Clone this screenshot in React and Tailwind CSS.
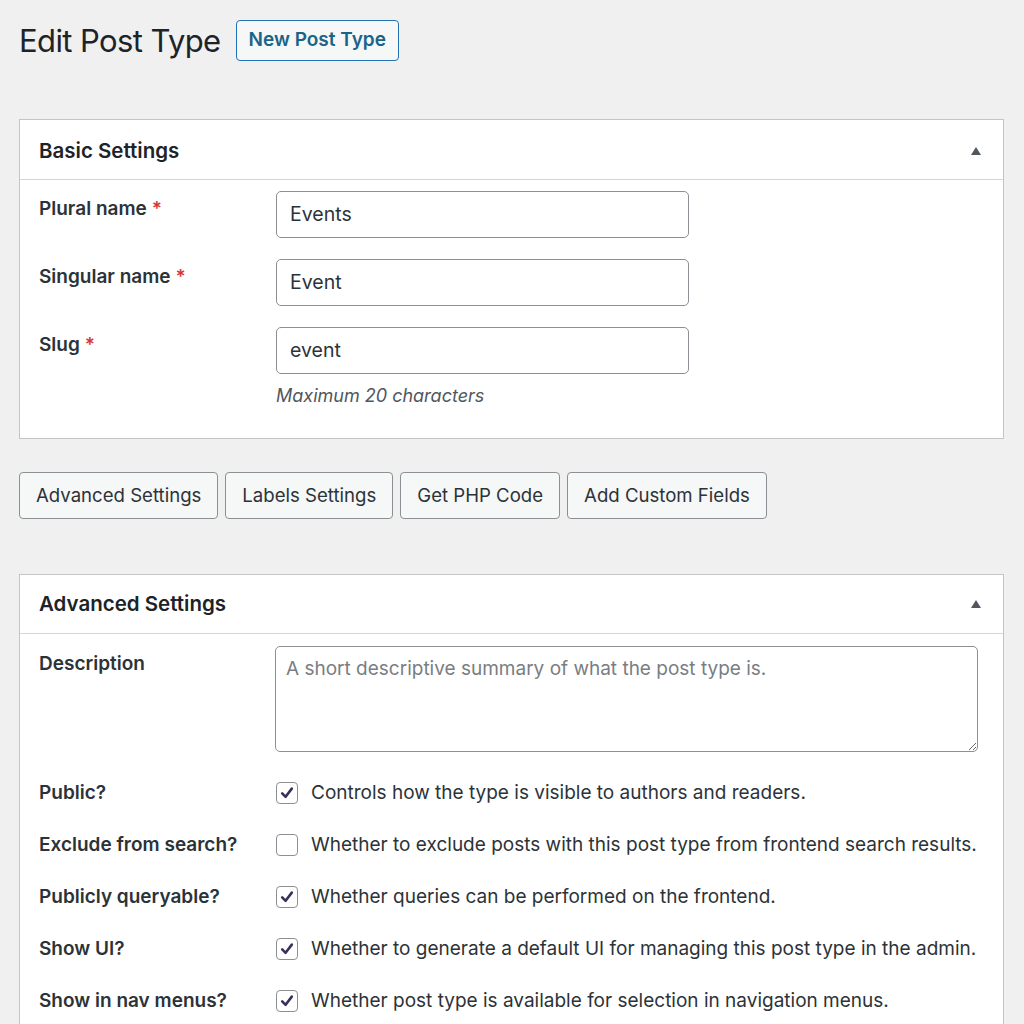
import React from "react";

const font = { fontFamily: "Inter, 'Noto Sans', sans-serif" };

function Check({ checked }) {
  return (
    <span className="flex h-[22px] w-[22px] shrink-0 items-center justify-center rounded-[4px] border border-[#8c8f94] bg-white">
      {checked && (
        <svg width="16" height="16" viewBox="0 0 16 16">
          <path d="M3.2 8.4 L6.6 11.8 L12.8 3.6" fill="none" stroke="#3d2f5b" strokeWidth="2.6" strokeLinecap="round" strokeLinejoin="round" />
        </svg>
      )}
    </span>
  );
}

function BoxHeader({ title, h }) {
  return (
    <div className={`flex items-center justify-between border-b border-[#d5d5d7] pl-[19px] pr-[20px] ${h}`}>
      <h2 className="text-[20.5px] font-semibold text-[#1d2327]">{title}</h2>
      <svg width="14" height="12" viewBox="0 0 14 12">
        <path d="M7 2 L12 10 L2 10 Z" fill="#50575e" />
      </svg>
    </div>
  );
}

function Label({ children, req }) {
  return (
    <div className="w-[237px] shrink-0 text-[19px] font-semibold text-[#2c3338]">
      {children}
      {req && <span className="ml-[5px] text-[#d63638]">*</span>}
    </div>
  );
}

function TextRow({ label, value }) {
  return (
    <div className="flex items-start">
      <div className="pt-[4px]"><Label req>{label}</Label></div>
      <div className="flex h-[47px] w-[413px] items-center rounded-[5px] border border-[#8c8f94] bg-white px-[13px] text-[19.5px] text-[#2c3338]">
        {value}
      </div>
    </div>
  );
}

function CheckRow({ label, checked, text }) {
  return (
    <div className="flex h-[52px] items-center">
      <Label>{label}</Label>
      <Check checked={checked} />
      <span className="ml-[13px] text-[19px] text-[#2c3338]">{text}</span>
    </div>
  );
}

function Btn({ children }) {
  return (
    <button className="flex h-[47px] items-center rounded-[4px] border border-[#8c8f94] bg-[#f6f7f7] px-[16px] text-[18.6px] text-[#2c3338]">
      {children}
    </button>
  );
}

export default function App() {
  return (
    <div style={font} className="min-h-[1024px] w-[1024px] overflow-hidden bg-[#f0f0f1] pl-[19px] pr-[20px] pt-[20px]">
      <div className="flex items-center">
        <h1 className="text-[31px] font-normal leading-[41px] tracking-[-0.6px] text-[#1d2327]">Edit Post Type</h1>
        <button className="ml-[15px] flex h-[41px] items-center rounded-[4px] border border-[#2271b1] bg-[#f6f7f7] px-[12px] text-[19px] font-semibold text-[#1a6489]">
          New Post Type
        </button>
      </div>

      <div className="mt-[58px] border border-[#c3c4c7] bg-white">
        <BoxHeader title="Basic Settings" h="h-[60px] pt-[3px]" />
        <div className="flex flex-col gap-[21px] pl-[19px] pt-[11px]">
          <TextRow label="Plural name" value="Events" />
          <TextRow label="Singular name" value="Event" />
          <div>
            <TextRow label="Slug" value="event" />
            <div className="ml-[237px] mt-[8px] text-[18px] italic text-[#50575e]">Maximum 20 characters</div>
          </div>
        </div>
        <div className="h-[29px]" />
      </div>

      <div className="mt-[33px] flex gap-[7px]">
        <Btn>Advanced Settings</Btn>
        <Btn>Labels Settings</Btn>
        <Btn>Get PHP Code</Btn>
        <Btn>Add Custom Fields</Btn>
      </div>

      <div className="mt-[55px] border border-[#c3c4c7] bg-white">
        <BoxHeader title="Advanced Settings" h="h-[59px]" />
        <div className="pl-[19px] pr-[25px] pt-[12px]">
          <div className="flex items-start">
            <div className="pt-[4px]"><Label>Description</Label></div>
            <textarea
              className="ml-[-1px] h-[106px] flex-1 resize rounded-[5px] border border-[#8c8f94] bg-white px-[10px] py-[8px] text-[19px] text-[#2c3338] placeholder:text-[#7a7d82] outline-none"
              placeholder="A short descriptive summary of what the post type is."
            />
          </div>
          <div className="mt-[15px] flex flex-col">
            <CheckRow label="Public?" checked text="Controls how the type is visible to authors and readers." />
            <CheckRow label="Exclude from search?" text="Whether to exclude posts with this post type from frontend search results." />
            <CheckRow label="Publicly queryable?" checked text="Whether queries can be performed on the frontend." />
            <CheckRow label="Show UI?" checked text="Whether to generate a default UI for managing this post type in the admin." />
            <CheckRow label="Show in nav menus?" checked text="Whether post type is available for selection in navigation menus." />
          </div>
        </div>
      </div>
    </div>
  );
}
